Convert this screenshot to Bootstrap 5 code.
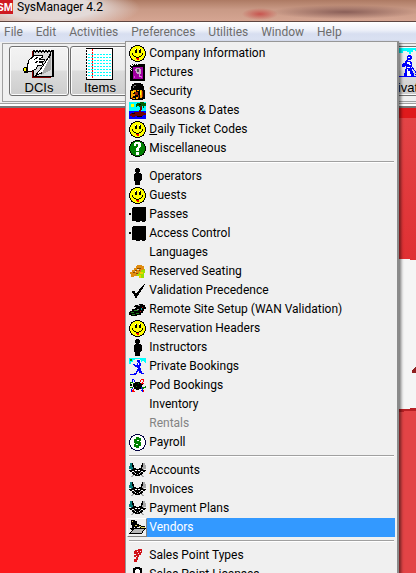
<!DOCTYPE html>
<html lang="en">
<head>
<meta charset="utf-8">
<meta name="viewport" content="width=device-width, initial-scale=1">
<title>SysManager 4.2</title>
<link href="https://cdn.jsdelivr.net/npm/bootstrap@5.3.0/dist/css/bootstrap.min.css" rel="stylesheet">
<style>
body{font-family:Roboto,"Open Sans",sans-serif;font-size:12px;line-height:19px;color:#000;background:#f0f0f0}
svg{shape-rendering:crispEdges;flex:none;display:block}
.titlebar{height:22px;border-bottom:1px solid #5f4640;background:
 radial-gradient(ellipse 90px 22px at 50px 8px,#e3dad8 50%,transparent),
 radial-gradient(ellipse 18px 6px at 260px 14px,#c8554f,transparent),
 radial-gradient(ellipse 74px 7px at 345px 12px,#8a5f58,transparent),
 linear-gradient(#ad7a63,#c99a86 45%,#d5a592)}
.titlebar h1{font-size:12px;line-height:15px}
.logo-sm{width:13px;height:14px;background:#cf1a20;color:#fff;font:bold 11px/14px "Liberation Sans",sans-serif;direction:rtl;overflow:hidden}
.menubar{height:20px;background:linear-gradient(#fff,#eef1f9 40%,#d7def0 60%,#dbe2f3);z-index:5}
.menubar .nav-link{color:#6d6d6d;padding:0 7px 0 6px;line-height:20px}
.menubar .dropdown-menu{--bs-dropdown-min-width:274px;top:19px;left:0;padding:2px 2px 8px 1px;border:1px solid #979797;border-right:2px solid #8a8a8a;background:#f0f0f0;box-shadow:2px 2px 3px #0008;font-size:12px;margin:0}
.menubar .dropdown-item{padding:0;color:#000;line-height:19px;height:19px}
.dropdown-item .pic{width:20px;height:19px;padding:1px 0 0 2px;flex:none}
.dropdown-item .text{padding-left:2px}
.dropdown-item.disabled{color:#838383!important}
.dropdown-item:hover,.dropdown-item.active{background:none}
.dropdown-item.active .text{background:#3399ff;color:#fff}
.dropdown-item.active .pic{border:1px solid;border-color:#fff #808080 #808080 #fff;padding:0 0 0 1px}
.menubar .dropdown-divider{margin:3px 1px 4px 2px;border-top:1px solid #a0a0a0;border-bottom:1px solid #fff;opacity:1;height:2px}
.toolbar{height:66px;padding:1px 0 4px 2px;border-bottom:2px solid #777;background:linear-gradient(#f0f0f0 61px,#a0a0a0 61px,#a0a0a0 62px,#fff 62px)}
.toolbar .frame{height:59px;border:1px solid #a0a0a0;border-right:0;padding:2px 0 0 6px;gap:1px;overflow:hidden}
.toolbar .btn{width:60px;height:50px;flex:none;padding:1px;border:1px solid #707070;border-radius:3px;background:linear-gradient(#f3f3f3,#ebebeb 48%,#dcdcdc 50%,#cdcdcd);box-shadow:inset 0 0 0 1px #fbfbfb;font:13px/15px "Liberation Sans",sans-serif;color:#000}
.toolbar .far{margin-left:244px}
.workspace{background:#fc191c}
</style>
</head>
<body class="vh-100 overflow-hidden d-flex flex-column">
<svg class="d-none" aria-hidden="true">
<symbol id="smile" viewBox="0 0 17 17"><path d="M6 0h5v1h2v1h2v2h1v2h1v5h-1v2h-1v2h-2v1h-2v1H6v-1H4v-1H2v-2H1v-2H0V6h1V4h1V2h2V1h2z"/><path fill="#ff0" d="M6 1h5v1h2v1h1v1h1v2h1v5h-1v2h-1v1h-1v1h-2v1H6v-1H4v-1H3v-1H2v-2H1V6h1V4h1V3h1V2h2z"/><path d="M6 4h2v4H6zM10 4h2v4h-2zM3 8h1v2H3zM13 8h1v2h-1zM4 10h1v1H4zM12 10h1v1h-1zM5 11h2v1H5zM10 11h2v1h-2zM7 12h3v1H7z"/><path fill="#fff" d="M6 4h1v1H6zM10 4h1v1h-1z"/><path fill="red" d="M7 13h3v1H7zM8 14h2v1H8z"/></symbol>
<symbol id="person" viewBox="0 0 17 17"><path d="M7 0h3v1h1v3h-1v1h2v1h1v6h-1v1h-1v4H6v-4H5V6h1V5h1V4H6V1h1z"/></symbol>
<symbol id="pass" viewBox="0 0 17 17"><path d="M4 1h13v14h-1v1h-3v-1h-2v1H7v-1H4zM0 7h2v2H0zM3 2h1v13H3z"/></symbol>
<symbol id="bull" viewBox="0 0 17 17"><path fill="#087b7b" d="M1 1h2v1h1v4h1v2H2V7H0V4h1z"/><path fill="#aaa" d="M14 1h2v2h1v4h-2v1h-3V6h1V2h1zM3 13h2v1H4v1H2v-1h1zM12 13h2v1h1v1h-2v-1h-1z"/><path d="M3 1h1v2h1v3h2v1h3V6h2V3h1V1h1v4h-1v2h1v1h3v1h-1v1h-2v2h-1v1h-2v1H6v-1H4v-1H3v-2H1V9H0V8h3V7h1V5H3z"/><path fill="#fff" d="M6 8h2v1H6zM9 8h2v1H9zM3 9h2v1H3zM12 9h2v1h-2zM6 11h1v1H6zM10 11h1v1h-1z"/><path fill="#aaa" d="M5 10h1v1H5zM11 10h1v1h-1zM8 12h1v1H8z"/></symbol>
<symbol id="skier" viewBox="0 0 17 17"><path fill="#0ff" d="M0 0h17v5h-1V4h-1V3h-2v1h-1V2h-1V1H6v1H4v2H2v2H0z"/><path fill="#0a0" d="M1 1h2v2H1z"/><path fill="#00f" d="M8 2h3v3h1v3h-1v2h1v3h1v2h2v1h-3v-1h-2v-2h-1v-2H9v3H8v2H7v1H1v-1h4v-1h2v-2h1V9H6V8H5V7H4V6h2v1h2V5h1V4H8z"/><path fill="#fff" d="M9 5h1v2H9zM8 10h1v1H8z"/></symbol>
</svg>
<header class="titlebar d-flex align-items-start flex-shrink-0">
<span class="logo-sm" aria-hidden="true">SM</span><h1 class="m-0 ms-1 fw-normal">SysManager 4.2</h1>
</header>
<nav class="menubar position-relative flex-shrink-0">
<ul class="nav flex-nowrap">
<li><a class="nav-link ps-1" href="#">File</a></li>
<li><a class="nav-link" href="#">Edit</a></li>
<li><a class="nav-link" href="#">Activities</a></li>
<li class="position-relative"><a class="nav-link" href="#" aria-expanded="true">Preferences</a>
<ul class="dropdown-menu show rounded-0">
<li><a class="dropdown-item d-flex" href="#"><span class="pic"><svg width="17" height="17"><use href="#smile"/></svg></span><span class="text flex-fill">Company Information</span></a></li>
<li><a class="dropdown-item d-flex" href="#"><span class="pic"><svg width="17" height="17" viewBox="0 0 17 17"><path d="M1 0h15v17H1z"/><path fill="#fff" d="M1 0h2v1H1zM4 0h1v1H4zM6 0h1v1H6zM8 0h1v1H8zM2 1h1v1H2zM1 3h1v1H1zM2 4h1v1H2zM1 5h1v1H1zM2 6h1v1H2zM3 1h1v1H3z"/><path fill="#a000a0" d="M4 3h10v12H4z"/><path fill="#c8a8c8" d="M7 4h4v1h1v5h-1v2h1v1h-2v-3H8V9H7V7H6V5h1z"/><path fill="#505050" d="M8 5h2v3H8z"/><path fill="#e040e0" d="M5 12h1v2H5zM12 12h1v2h-1z"/></svg></span><span class="text flex-fill">Pictures</span></a></li>
<li><a class="dropdown-item d-flex" href="#"><span class="pic"><svg width="17" height="17" viewBox="0 0 17 17"><path d="M5 0h7v1h2v2h1v4h1v9h-2v1H3v-1H1V7h1V3h1V1h2z"/><path fill="#777" d="M5 2h2v1H5zM4 3h1v2H4z"/><path fill="#ffa500" d="M2 8h2v7H2zM4 7h3v2H4zM4 11h2v2H4zM8 7h2v1H8zM11 7h2v8h-2zM7 14h2v2H7zM4 15h2v1H4z"/><path fill="#a22000" d="M6 9h3v3H6zM9 12h1v3H9zM13 8h1v6h-1zM3 14h1v2H3z"/><path fill="#ff0" d="M4 8h1v2H4zM11 8h1v4h-1z"/></svg></span><span class="text flex-fill">Security</span></a></li>
<li><a class="dropdown-item d-flex" href="#"><span class="pic"><svg width="17" height="17" viewBox="0 0 17 17"><path fill="#0ff" d="M0 0h17v9H0z"/><path fill="#00f" d="M0 9h17v8H0z"/><path fill="#ff0" d="M2 2h3v3H2z"/><path fill="#006000" d="M8 1h3V0h4v1h2v3h-2v2h-1V4h-2v1h-2V4H8v1H7V2h1z"/><path fill="#700000" d="M12 4h1v4h-1v2h3v1h2v2h-3v1H6v1H3v-1H1v-2h1v-1h3v-1h5V8h1V5h1z"/><path d="M10 2h2v1h-2zM3 11h3v1H3zM8 14h5v1H8z"/></svg></span><span class="text flex-fill">Seasons &amp; Dates</span></a></li>
<li><a class="dropdown-item d-flex" href="#"><span class="pic"><svg width="17" height="17"><use href="#smile"/></svg></span><span class="text flex-fill"><u>D</u>aily Ticket Codes</span></a></li>
<li><a class="dropdown-item d-flex" href="#"><span class="pic"><svg width="17" height="17" viewBox="0 0 17 17"><path d="M6 0h5v1h2v1h2v2h1v2h1v5h-1v2h-1v2h-2v1h-2v1H6v-1H4v-1H2v-2H1v-2H0V6h1V4h1V2h2V1h2z"/><path fill="#008000" d="M6 1h5v1h2v1h1v1h1v2h1v5h-1v2h-1v1h-1v1h-2v1H6v-1H4v-1H3v-1H2v-2H1V6h1V4h1V3h1V2h2z"/><path fill="#fff" d="M6 2h5v1h1v4h-1v1h-1v3H7V8h1V7h1V4H7v2H5V3h1zM7 12h3v3H7z"/></svg></span><span class="text flex-fill">Miscellaneous</span></a></li>
<li><hr class="dropdown-divider"></li>
<li><a class="dropdown-item d-flex" href="#"><span class="pic"><svg width="17" height="17"><use href="#person"/></svg></span><span class="text flex-fill">Operators</span></a></li>
<li><a class="dropdown-item d-flex" href="#"><span class="pic"><svg width="17" height="17"><use href="#smile"/></svg></span><span class="text flex-fill">Guests</span></a></li>
<li><a class="dropdown-item d-flex" href="#"><span class="pic"><svg width="17" height="17"><use href="#pass"/></svg></span><span class="text flex-fill">Passes</span></a></li>
<li><a class="dropdown-item d-flex" href="#"><span class="pic"><svg width="17" height="17"><use href="#pass"/></svg></span><span class="text flex-fill">Access Control</span></a></li>
<li><a class="dropdown-item d-flex" href="#"><span class="pic"></span><span class="text flex-fill">Languages</span></a></li>
<li><a class="dropdown-item d-flex" href="#"><span class="pic"><svg width="17" height="17" viewBox="0 0 17 17"><path fill="#9be000" d="M9 6h7v4h-1v5h-3v-2H4v-2z"/><path fill="#f0d000" d="M11 9h3v2h-3zM10 12h2v3h-2z"/><path fill="#e08c10" d="M8 2h5v1h2v4h-3v2h-2v2H8v2H5v1H2v-3H1V9h2V7h2V5h2V3h1z"/><path fill="#8c4a00" d="M8 5h4v1H8zM6 7h2v1H6zM4 9h2v1H4zM10 7h1v1h-1zM7 10h2v1H7z"/><path fill="#ddd" d="M8 6h2v1H8zM6 8h1v1H6z"/></svg></span><span class="text flex-fill">Reserved Seating</span></a></li>
<li><a class="dropdown-item d-flex" href="#"><span class="pic"><svg width="17" height="17" viewBox="0 0 17 17"><path d="M15 2h1v1h-1v2h-1v2h-1v1h-1v2h-1v1h-1v2H9v1H8v2H6v-2H5v-2H4v-1H3V9h3v2h2v-1h1V9h1V7h1V6h1V5h1V4h1V3h1z"/></svg></span><span class="text flex-fill">Validation Precedence</span></a></li>
<li><a class="dropdown-item d-flex" href="#"><span class="pic"><svg width="17" height="17" viewBox="0 0 17 17"><path d="M6 4h4V3h4v1h2v2h1v2h-2v2h-1v2h-2v2H8v1H2v-1H0v-3h1v-1h2V8h3V7h1V6H5V5h1z"/><path fill="#208020" d="M5 9h4v1H5zM2 11h3v1H2zM7 12h3v1H7zM3 13h3v1H3z"/><path fill="#999" d="M9 4h2v1H9zM8 8h2v1H8z"/><path fill="#d01010" d="M13 6h1v1h-1zM11 10h1v1h-1z"/><path fill="#0aa" d="M12 7h1v2h-1z"/></svg></span><span class="text flex-fill">Remote Site Setup (WAN Validation)</span></a></li>
<li><a class="dropdown-item d-flex" href="#"><span class="pic"><svg width="17" height="17"><use href="#smile"/></svg></span><span class="text flex-fill">Reservation Headers</span></a></li>
<li><a class="dropdown-item d-flex" href="#"><span class="pic"><svg width="17" height="17"><use href="#person"/></svg></span><span class="text flex-fill">Instructors</span></a></li>
<li><a class="dropdown-item d-flex" href="#"><span class="pic"><svg width="17" height="17"><use href="#skier"/></svg></span><span class="text flex-fill">Private Bookings</span></a></li>
<li><a class="dropdown-item d-flex" href="#"><span class="pic"><svg width="17" height="17" viewBox="0 0 17 17"><path fill="#00f" d="M3 2h2v1h1v2H5V3H4v2H3zM12 10h1v1h1v2h1v2h-2v-1h-1v-1h2v1h-1v-2h-1zM2 12h1v-1h1v1H3v2h1v1H2z"/><path fill="red" d="M12 2h3v3h-1v1h-1V5h1V3h-2v2h-1V3h1zM4 12h1v2h1v1H3v-2h1zM14 13h1v2h-1z"/><path fill="#008000" d="M1 5h3v1h2v1H4V6H2v1H1zM13 10h3V9h1v2h-2v1h-2zM1 10h3V9h1v1H4v1H1z"/><path fill="red" d="M12 6h3v1h-3z"/><path d="M6 5h5v1h1v1h2v1h-1v2h-1v2h-2v1H7v-1H5v-2H4V7h1V6h1zM1 7h2v2H1z"/><path fill="#008000" d="M7 9h1v1H7zM9 6h1v1H9z"/></svg></span><span class="text flex-fill">Pod Bookings</span></a></li>
<li><a class="dropdown-item d-flex" href="#"><span class="pic"></span><span class="text flex-fill">Inventory</span></a></li>
<li><a class="dropdown-item d-flex disabled" href="#" aria-disabled="true"><span class="pic"></span><span class="text flex-fill">Rentals</span></a></li>
<li><a class="dropdown-item d-flex" href="#"><span class="pic"><svg width="17" height="17" viewBox="0 0 17 17"><path fill="#000040" d="M6 0h5v1h2v1h2v2h1v2h1v5h-1v2h-1v2h-2v1h-2v1H6v-1H4v-1H2v-2H1v-2H0V6h1V4h1V2h2V1h2z"/><path fill="#fff" d="M6 1h5v1h2v1h1v1h1v2h1v5h-1v2h-1v1h-1v1h-2v1H6v-1H4v-1H3v-1H2v-2H1V6h1V4h1V3h1V2h2z"/><path fill="#008000" d="M7 3h3v1h2v3h-2V6H8v1h3v1h1v4h-2v2H7v-1H5v-3h2v1h2v-1H6V9H5V5h2z"/></svg></span><span class="text flex-fill">Payroll</span></a></li>
<li><hr class="dropdown-divider"></li>
<li><a class="dropdown-item d-flex" href="#"><span class="pic"><svg width="17" height="17"><use href="#bull"/></svg></span><span class="text flex-fill">Accounts</span></a></li>
<li><a class="dropdown-item d-flex" href="#"><span class="pic"><svg width="17" height="17"><use href="#bull"/></svg></span><span class="text flex-fill">Invoices</span></a></li>
<li><a class="dropdown-item d-flex" href="#"><span class="pic"><svg width="17" height="17"><use href="#bull"/></svg></span><span class="text flex-fill">Payment Plans</span></a></li>
<li><a class="dropdown-item active d-flex" href="#"><span class="pic"><svg width="17" height="17" viewBox="0 0 17 17"><path d="M5 9h12v1h-1v1h-1v1h-1v2h-1v1H0v-1h1v-1h1v-1h1v-1h1v-1h1z"/><path fill="#b8b8b8" d="M6 10h9v1h-1v1h-1v2H2v-1h1v-1h1v-1h1v-1h1z"/><path d="M2 1h4v1h2v3h2v1h2v1h4v2h-5V8H8v1H6V8H5v3H2v-1H1V9h2V6H2z"/><path fill="#e8d860" d="M6 6h2v1H6zM10 7h2v1h-2zM12 8h4v1h-4zM3 2h1v1H3z"/></svg></span><span class="text flex-fill">Vendors</span></a></li>
<li><hr class="dropdown-divider"></li>
<li><a class="dropdown-item d-flex" href="#"><span class="pic"><svg width="17" height="17" viewBox="0 0 17 17"><path fill="#d01018" d="M6 3h3V2h4v4h-1v2h-2v2H9v3H8v2H5v-3h2v-2H5V8h2V7H5V4h1z"/><path fill="#f0f0f0" d="M8 4h1v1H8zM9 6h1v1H9zM11 4h1v1h-1zM7 9h1v1H7z"/></svg></span><span class="text flex-fill">Sales Point Types</span></a></li>
<li><a class="dropdown-item d-flex" href="#"><span class="pic"><svg width="17" height="17" viewBox="0 0 17 17"><path d="M6 1h5v1h2v5h1v9H3V7h1V2h2z"/><path fill="#fff" d="M7 3h3v1h1v3H6V4h1zM5 9h7v1H5z"/></svg></span><span class="text flex-fill">Sales Point Licenses</span></a></li>
</ul></li>
<li><a class="nav-link" href="#">Utilities</a></li>
<li><a class="nav-link" href="#">Window</a></li>
<li><a class="nav-link" href="#">Help</a></li>
</ul>
</nav>
<div class="toolbar flex-shrink-0"><div class="frame d-flex">
<button class="btn d-flex flex-column align-items-center" type="button"><svg width="32" height="32" viewBox="0 0 32 32"><path fill="#800000" d="M9 3h2v25h17v2H9z"/><path d="M10 2h21v27H10z"/><path fill="#d8d8d8" d="M11 4h18v24H11z"/><path fill="#fff" d="M12 1h1v2h-1zM15 1h1v2h-1zM18 1h1v2h-1zM21 1h1v2h-1zM24 1h1v2h-1zM27 1h1v2h-1z"/><path d="M12 3h1v2h-1zM15 3h1v2h-1zM18 3h1v2h-1zM21 3h1v2h-1zM24 3h1v2h-1zM27 3h1v2h-1z"/><path fill="#fff" stroke="#000" d="M28 5L20 18l-8 10 11-5z"/><path fill="#aaa" d="M28 7v15l-10 5z"/><path stroke="#000" fill="#fff" d="M4 19l2-7 6-5 7 0 1 2-4 2 5 0 0 2-5 1 4 1-1 2-4 0-2 4-4 2-4 0-1 2z"/><path fill="none" stroke="#000" d="M11 12l4-3M12 15l3-2"/><path d="M1 19h3v1h1v3H4v2H1v-2H0v-3h1z"/><path fill="#ff0" d="M1 20h2v3H1z"/></svg>DCIs</button>
<button class="btn d-flex flex-column align-items-center" type="button"><svg width="32" height="32" viewBox="0 0 32 32"><path d="M2 0h27v32H2z"/><path fill="#fff" d="M3 1h25v30H3z"/><path stroke="#0ff" stroke-width="1" stroke-dasharray="2 1" d="M4 6.500h24M4 9.500h24M4 12.500h24M4 15.500h24M4 18.500h24M4 21.500h24M4 24.500h24M4 27.500h24"/><path stroke="red" stroke-dasharray="2 1" d="M8.500 1v30"/><path stroke="#fff" stroke-dasharray="1 2" d="M2.500 1v30"/></svg>Items</button>
<button class="btn far d-flex flex-column align-items-center" type="button"><svg width="32" height="32" viewBox="0 0 32 32"><path fill="#0ff" d="M0 0h32v6h-2V5h-2V3h-2V2h-2v2h-2v2h-2V4h-2V3h-4v2H8v3H4v3H0z"/><path fill="#00f" d="M18 7h4v1h1v3h-1v1h-3v1h3v1h1v4h-1v2h1v3h1v2h1v3h4v1H9v-1h6v-3h1v-4h1v-3h-1v1h-3v-3h1v-1h2v-2h1v-1h1V8h1z"/><path fill="#fff" d="M19 9h2v1h-2zM18 14h3v2h-3zM20 16h2v1h-2zM18 19h3v1h-3zM18 21h1v7h-1zM19 23h2v5h-2zM21 26h1v2h-1z"/><path fill="none" stroke="#00f" d="M22 18l7 9M26 26h4M29 23l-2 4"/></svg>Private</button>
</div></div>
<main class="workspace flex-fill overflow-hidden d-flex justify-content-end align-items-start">
<svg width="24" height="467" viewBox="0 0 24 467" role="img" aria-label="Backdrop"><defs><linearGradient id="red" x2="0" y2="1"><stop stop-color="#e34446"/><stop offset="1" stop-color="#e03033"/></linearGradient></defs><path fill="#df1a1c" d="M0 0h24v10H0z"/><path fill="url(#red)" d="M0 10h24v143H0z"/><path fill="#f5f5f5" d="M0 150l24 2v149l-24 2z"/><path fill="#b72024" d="M0 302l24-2v3l-24 1z"/><path fill="#e34446" d="M0 304l24-1v164H0z"/><path fill="#902020" d="M24 258v7h-4v-2z"/></svg>
</main>
<script src="https://cdn.jsdelivr.net/npm/bootstrap@5.3.0/dist/js/bootstrap.bundle.min.js"></script>
</body>
</html>
